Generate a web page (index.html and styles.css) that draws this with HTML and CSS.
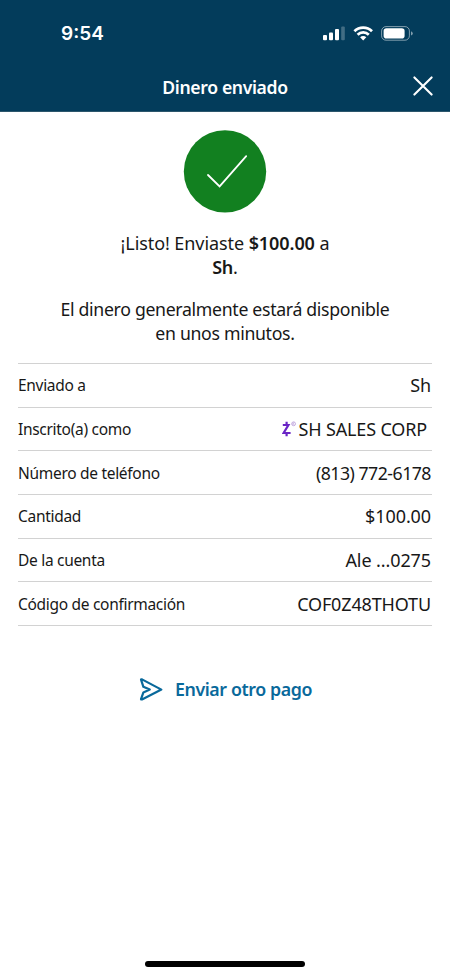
FILE: index.html
```html
<!DOCTYPE html>
<html lang="es">
<head>
	<meta charset="utf-8">
	<meta name="viewport" content="width=device-width, initial-scale=1">
	<title>Dinero enviado</title>
	<link rel="stylesheet" href="styles.css">
</head>
<body>
	<div class="top">
		<div class="status">
			<span class="time">9:54</span>
			<svg class="status-icons" width="92" height="20" viewBox="0 0 92 20">
				<g fill="#fff">
					<rect x="1" y="12" width="4" height="5.2" rx="1"/>
					<rect x="7" y="9.5" width="4" height="7.7" rx="1"/>
					<rect x="13" y="6" width="4" height="11.2" rx="1"/>
					<rect x="19.2" y="3.4" width="3.6" height="13.8" rx="1" opacity=".25"/>
				</g>
				<g fill="none" stroke="#fff" stroke-width="2.7">
					<path d="M32.4 8.2a12.4 12.4 0 0 1 17.6 0"/>
					<path d="M35.6 11.7a7.9 7.9 0 0 1 11.2 0"/>
				</g>
				<path d="M41.2 17.4l-3.1-3.1a4.4 4.4 0 0 1 6.2 0z" fill="#fff"/>
				<rect x="59.6" y="3.6" width="27.8" height="13.6" rx="4.4" fill="none" stroke="#fff" stroke-opacity=".5"/>
				<rect x="61.6" y="5.2" width="21" height="10.4" rx="2.8" fill="#fff"/>
				<path d="M89 8.2q1.8.8 1.8 2.2t-1.8 2.2z" fill="#fff" opacity=".5"/>
			</svg>
		</div>
		<div class="header">
			<h1>Dinero enviado</h1>
			<a class="close" href="#" aria-label="Cerrar">
				<svg width="20" height="20" viewBox="0 0 20 20">
					<path d="M1.4 1.4l17.2 17.2M18.6 1.4L1.4 18.6" stroke="#fff" stroke-width="2.1" stroke-linecap="round"/>
				</svg>
			</a>
		</div>
	</div>
	<div class="content">
		<svg class="check" width="84" height="84" viewBox="0 0 84 84">
			<circle cx="42" cy="42.4" r="41.2" fill="#128020"/>
			<path d="M25 46l11.6 11.4L63.2 27.2" fill="none" stroke="#fff" stroke-width="1.8" stroke-linecap="round"/>
		</svg>
		<p class="message sent">¡Listo! Enviaste <b>$100.00</b> a<br><b class="name">Sh</b>.</p>
		<p class="message info">El dinero generalmente estará disponible<br>en unos minutos.</p>
		<ul class="details">
			<li><span class="label">Enviado a</span><span class="value">Sh</span></li>
			<li>
				<span class="label">Inscrito(a) como</span>
				<span class="value corp">
					<svg width="16" height="16" viewBox="0 0 16 16">
						<path d="M.8 4h5.6L1.6 12h7M4.6.8V4M4.6 12v3.2" fill="none" stroke="#6a25c5" stroke-width="2.2"/>
						<circle cx="11.6" cy="2.8" r="1.9" fill="none" stroke="#b596d8" stroke-width=".8"/>
						<path d="M10.9 3.9V1.8h.8q.7.5-.6 1l1 1.1" fill="none" stroke="#b596d8" stroke-width=".5"/>
					</svg>
					<span>SH SALES CORP</span>
				</span>
			</li>
			<li><span class="label">Número de teléfono</span><span class="value phone">(813) 772-6178</span></li>
			<li><span class="label">Cantidad</span><span class="value">$100.00</span></li>
			<li><span class="label">De la cuenta</span><span class="value">Ale ...0275</span></li>
			<li><span class="label">Código de confirmación</span><span class="value code">COF0Z48THOTU</span></li>
		</ul>
		<a class="again" href="#">
			<svg width="24" height="24" viewBox="0 0 24 24">
				<path d="M2.2 3.2Q1.6 2 3 2.4L22.4 12.6 3 22.4q-1.4.4-.8-.8L4.4 15.4l6.4-2.8L4.4 9.8z" fill="none" stroke="#09699b" stroke-width="2.2" stroke-linejoin="round"/>
			</svg>
			<span>Enviar otro pago</span>
		</a>
	</div>
	<div class="home-bar"></div>
</body>
</html>
```

FILE: styles.css
```css
*{
	margin:0;
	padding:0;
	box-sizing:border-box;
	text-decoration:none;
	list-style:none;
}
body{
	display:flex;
	flex-direction:column;
	height:976px;
	background:#fff;
	color:#181818;
	font-family:"Noto Sans",sans-serif;
}
.top{
	height:112px;
	background:#033c5b;
	border-bottom:1px solid #2c566c;
	color:#fff;
}
.status{
	display:flex;
	justify-content:space-between;
	height:62px;
	padding:23px 36px 0 61px;
}
.time{
	font:600 19px/22px Inter,sans-serif;
}
.header{
	display:grid;
	grid-template-columns:1fr auto 1fr;
	align-items:center;
	height:49px;
	padding:0 17px;
}
.header h1{
	grid-column:2;
	font-size:17.6px;
	line-height:24px;
	font-weight:600;
	letter-spacing:-0.35px;
}
.close{
	justify-self:end;
	height:20px;
	margin-bottom:1px;
}
.content{
	display:flex;
	flex-direction:column;
	align-items:center;
	flex:1;
	padding:17px 18px 0;
}
.message{
	font-size:18px;
	line-height:24px;
	text-align:center;
}
.sent{
	margin-top:18px;
	letter-spacing:-0.08px;
}
.info{
	margin-top:18px;
	font-size:17.7px;
	letter-spacing:-0.32px;
}
.message b{
	font-weight:600;
}
.message .name{
	letter-spacing:-0.3px;
}
.details{
	width:100%;
	margin-top:18px;
	border-top:1px solid #d2d2d2;
}
.details li{
	display:flex;
	justify-content:space-between;
	align-items:center;
	height:43.65px;
	padding-right:1px;
	border-bottom:1px solid #d2d2d2;
}
.label{
	font-size:15.5px;
	letter-spacing:-0.3px;
}
.value{
	font-size:18px;
	letter-spacing:-0.1px;
}
.corp{
	display:flex;
	align-items:center;
	gap:1px;
	padding-right:4px;
}
.corp span{
	letter-spacing:-0.15px;
}
.phone{
	font-size:17.7px;
	letter-spacing:-0.5px;
}
.code{
	letter-spacing:-0.15px;
}
.again{
	display:flex;
	align-items:center;
	gap:12px;
	margin:51px 0 0 1px;
	color:#09699b;
	font-size:17.8px;
	line-height:24px;
	font-weight:600;
	letter-spacing:-0.4px;
}
.home-bar{
	width:160px;
	height:6px;
	margin:0 auto 9px;
	border-radius:3px;
	background:#000;
}
```
